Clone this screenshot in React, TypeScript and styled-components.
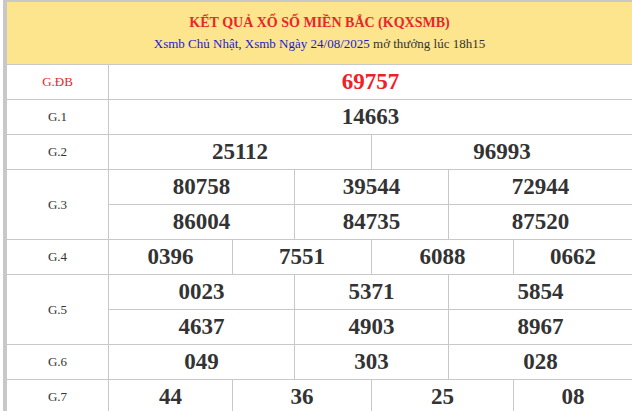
import React from "react";
import styled, { createGlobalStyle } from "styled-components";

const G = createGlobalStyle`body{margin:0;background:#fff;font-family:"Liberation Serif","Times New Roman",serif;}`;
const Wrap = styled.div`margin-left:3px;border-left:4px solid #c8c8c8;border-top:2px solid #c8c8c8;width:625px;`;
const Head = styled.div`background:#fde58e;height:62px;display:flex;flex-direction:column;align-items:center;justify-content:center;gap:5px;border-bottom:1px solid #c8c8c8;`;
const Title = styled.div`color:#e8262b;font-weight:bold;font-size:14px;`;
const Sub = styled.div`color:#1a1acc;font-size:13px;span{color:#333;}`;
const Row = styled.div`display:flex;border-bottom:1px solid #c8c8c8;`;
const Label = styled.div<{ red?: boolean }>`width:101px;flex:none;display:flex;align-items:center;justify-content:center;font-size:13px;color:${p => p.red ? "#e8262b" : "#333"};border-right:1px solid #c8c8c8;`;
const Lines = styled.div`flex:1;display:flex;flex-direction:column;`;
const Line = styled.div`display:flex;height:34px;& + &{border-top:1px solid #c8c8c8;}`;
const Cell = styled.div<{ w?: number; red?: boolean }>`${p => p.w ? `width:${p.w}px;flex:none;` : "flex:1;"}display:flex;align-items:center;justify-content:center;font-weight:bold;font-size:23px;color:${p => p.red ? "#ee2028" : "#333"};& + &{border-left:1px solid #c8c8c8;}`;

const W3 = [185, 153];
const W4 = [123, 138, 141];
const line = (nums: string[], ws: number[], red?: boolean) => (
  <Line>{nums.map((n, i) => <Cell key={i} w={ws[i]} red={red}>{n}</Cell>)}</Line>
);

export default function App() {
  return (<><G /><Wrap>
    <Head><Title>KẾT QUẢ XỔ SỐ MIỀN BẮC (KQXSMB)</Title>
      <Sub>Xsmb Chủ Nhật, Xsmb Ngày 24/08/2025 <span>mở thưởng lúc 18h15</span></Sub></Head>
    <Row><Label red>G.ĐB</Label><Lines>{line(["69757"], [], true)}</Lines></Row>
    <Row><Label>G.1</Label><Lines>{line(["14663"], [])}</Lines></Row>
    <Row><Label>G.2</Label><Lines>{line(["25112", "96993"], [262])}</Lines></Row>
    <Row><Label>G.3</Label><Lines>{line(["80758", "39544", "72944"], W3)}{line(["86004", "84735", "87520"], W3)}</Lines></Row>
    <Row><Label>G.4</Label><Lines>{line(["0396", "7551", "6088", "0662"], W4)}</Lines></Row>
    <Row><Label>G.5</Label><Lines>{line(["0023", "5371", "5854"], W3)}{line(["4637", "4903", "8967"], W3)}</Lines></Row>
    <Row><Label>G.6</Label><Lines>{line(["049", "303", "028"], W3)}</Lines></Row>
    <Row><Label>G.7</Label><Lines>{line(["44", "36", "25", "08"], W4)}</Lines></Row>
  </Wrap></>);
}
